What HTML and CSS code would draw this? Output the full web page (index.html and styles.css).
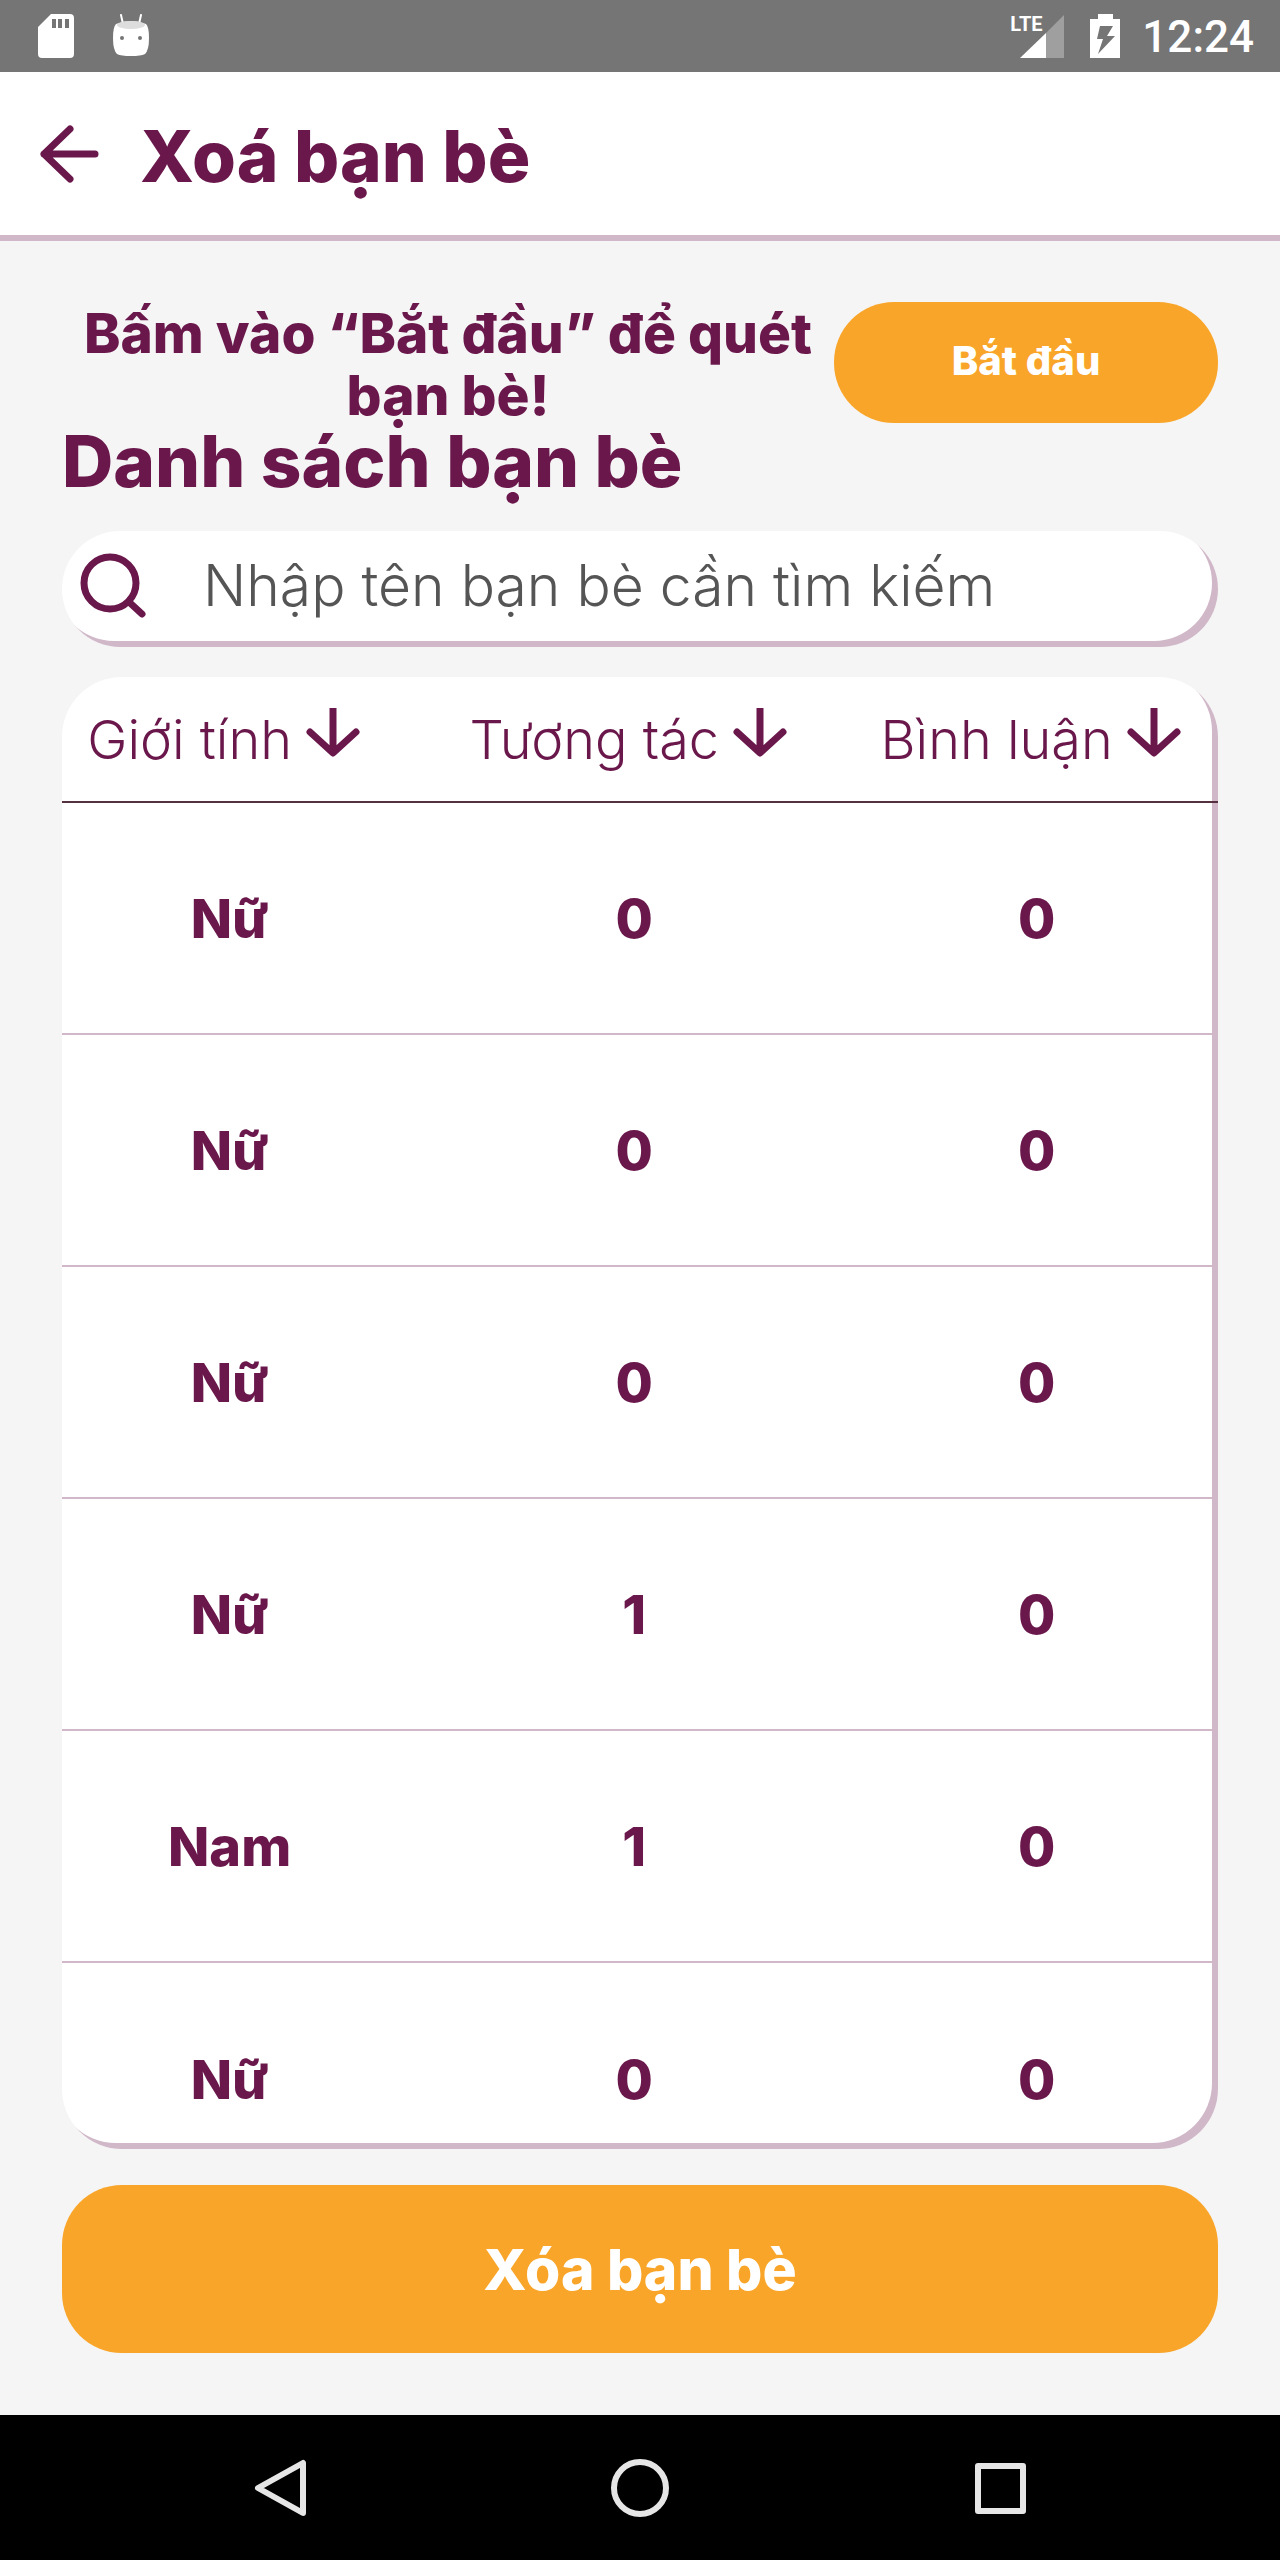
FILE: index.html
```html
<!DOCTYPE html>
<html lang="vi">
<head>
<meta charset="utf-8">
<meta name="viewport" content="width=device-width, initial-scale=1">
<title>Xoá bạn bè</title>
<link rel="stylesheet" href="styles.css">
</head>
<body>
<div class="app">
  <div class="status-bar">
    <div class="status-group status-left">
      <svg width="36" height="44" viewBox="0 0 36 44" aria-hidden="true">
        <path fill="#fff" fill-rule="evenodd" d="M13 0h19a4 4 0 0 1 4 4v36a4 4 0 0 1-4 4H4a4 4 0 0 1-4-4V13zM14 5v9h4V5zM20 5v9h4V5zM27 5v9h4V5z"/>
      </svg>
      <svg width="36" height="44" viewBox="0 0 36 44" aria-hidden="true">
        <path d="M8 1l2 9M28 1l-2 9" stroke="#fff" stroke-width="2" stroke-linecap="round"/>
        <path fill="#fff" d="M3 10q15-6 30 0q3 3 3 14q0 12-4 16q-4 2-14 2t-14-2q-4-4-4-16q0-11 3-14z"/>
        <ellipse cx="18" cy="11" rx="14" ry="4" fill="#ddd"/>
        <circle cx="9" cy="24" r="2" fill="#757575"/>
        <circle cx="27" cy="24" r="2" fill="#757575"/>
      </svg>
    </div>
    <div class="status-group">
      <div class="signal">
        <svg width="44" height="44" viewBox="0 0 44 44" aria-hidden="true">
          <path fill="#9f9f9f" d="M44 1v43H26V19z"/>
          <path fill="#fff" d="M26 19v25H0z"/>
        </svg>
        <span class="network">LTE</span>
      </div>
      <svg class="battery" width="30" height="44" viewBox="0 0 30 44" aria-hidden="true">
        <path fill="#fff" fill-rule="evenodd" d="M8 0h15v5h7v39H0V5h8zM10 12L7 25h6L8 40L25 22h-8l6-10z"/>
      </svg>
      <span class="clock">12:24</span>
    </div>
  </div>

  <header class="header">
    <button class="back" type="button" aria-label="Quay lại">
      <svg width="60" height="58" viewBox="0 0 60 58" fill="none" stroke="currentColor" stroke-width="7" stroke-linecap="round" stroke-linejoin="round" aria-hidden="true">
        <path d="M55 29H4M30 4L4 29l26 25"/>
      </svg>
    </button>
    <h1 class="title">Xoá bạn bè</h1>
  </header>

  <main class="content">
    <div class="scan">
      <p class="scan-text">Bấm vào “Bắt đầu” để quét bạn bè!</p>
      <button class="button scan-button" type="button">Bắt đầu</button>
    </div>
    <h2 class="subtitle">Danh sách bạn bè</h2>

    <label class="search">
      <svg width="68" height="66" viewBox="0 0 68 66" fill="none" stroke="currentColor" stroke-width="7" stroke-linecap="round" aria-hidden="true">
        <ellipse cx="31" cy="30" rx="26" ry="26"/>
        <path d="M50 49l13 12"/>
      </svg>
      <input class="search-input" type="search" aria-label="Tìm bạn bè" placeholder="Nhập tên bạn bè cần tìm kiếm">
    </label>

    <div class="card">
      <table class="friends">
        <colgroup><col class="col-gender"><col class="col-reaction"><col class="col-comment"></colgroup>
        <thead>
          <tr>
            <th scope="col"><button class="sort" type="button">Giới tính<svg class="arrow" viewBox="0 0 54 50" aria-hidden="true"><path d="M27 0v44M4 24l23 21 23-21"/></svg></button></th>
            <th scope="col"><button class="sort" type="button">Tương tác<svg class="arrow" viewBox="0 0 54 50" aria-hidden="true"><path d="M27 0v44M4 24l23 21 23-21"/></svg></button></th>
            <th scope="col"><button class="sort" type="button">Bình luận<svg class="arrow" viewBox="0 0 54 50" aria-hidden="true"><path d="M27 0v44M4 24l23 21 23-21"/></svg></button></th>
          </tr>
        </thead>
        <tbody>
          <tr><td>Nữ</td><td>0</td><td>0</td></tr>
          <tr><td>Nữ</td><td>0</td><td>0</td></tr>
          <tr><td>Nữ</td><td>0</td><td>0</td></tr>
          <tr><td>Nữ</td><td>1</td><td>0</td></tr>
          <tr><td>Nam</td><td>1</td><td>0</td></tr>
          <tr><td>Nữ</td><td>0</td><td>0</td></tr>
        </tbody>
      </table>
    </div>

    <button class="button delete-button" type="button">Xóa bạn bè</button>
  </main>

  <nav class="nav-bar" aria-label="Điều hướng hệ thống">
    <button class="nav-button" type="button" aria-label="Trở về">
      <svg width="60" height="60" viewBox="0 0 60 60" aria-hidden="true"><path d="M53 5v50L8 30z"/></svg>
    </button>
    <button class="nav-button" type="button" aria-label="Màn hình chính">
      <svg width="60" height="60" viewBox="0 0 60 60" aria-hidden="true"><circle cx="30" cy="30" r="26"/></svg>
    </button>
    <button class="nav-button" type="button" aria-label="Ứng dụng gần đây">
      <svg width="60" height="60" viewBox="0 0 60 60" aria-hidden="true"><path d="M8 8h45v45H8z"/></svg>
    </button>
  </nav>
</div>
</body>
</html>
```
FILE: styles.css
```css
:root {
  --plum: #6a174b;
  --lilac: #d0b8c9;
  --orange: #f9a529;
}

* {
  box-sizing: border-box;
}

body {
  margin: 0;
  background: #f5f5f5;
  color: var(--plum);
  font-family: Inter, "Open Sans", sans-serif;
  font-size: 54px;
}

button {
  padding: 0;
  border: 0;
  background: none;
  color: inherit;
  font: inherit;
}

svg {
  display: block;
  flex: none;
}

.app {
  display: flex;
  flex-direction: column;
  height: 100vh;
}

/* System status bar */
.status-bar {
  display: flex;
  justify-content: space-between;
  align-items: center;
  height: 72px;
  padding: 0 26px 0 38px;
  background: #757575;
  color: #fff;
  font-family: Roboto, sans-serif;
}

.status-group {
  display: flex;
  align-items: center;
}

.status-left {
  gap: 39px;
}

.signal {
  position: relative;
}

.network {
  position: absolute;
  top: 0;
  left: -10px;
  font-size: 20px;
  font-weight: 700;
  line-height: 20px;
}

.battery {
  margin: 0 22px 0 26px;
}

.clock {
  padding-top: 2px;
  font-size: 44px;
  font-weight: 500;
  line-height: 72px;
}

/* Header */
.header {
  display: flex;
  align-items: center;
  gap: 40px;
  height: 169px;
  padding: 0 40px;
  border-bottom: 6px solid var(--lilac);
  background: #fff;
}

.title,
.subtitle {
  margin: 0;
  font-size: 71px;
  font-weight: 800;
}

.title {
  padding-top: 4px;
}

/* Content */
.content {
  display: flex;
  flex: 1;
  flex-direction: column;
  min-height: 0;
  padding: 61px 62px 62px;
}

.scan {
  display: flex;
  align-items: flex-start;
}

.scan-text {
  flex: 1;
  margin: 0;
  font-size: 55px;
  font-weight: 800;
  line-height: 62px;
  text-align: center;
}

.button {
  border-radius: 60px;
  background: var(--orange);
  color: #fff;
  font-weight: 800;
}

.scan-button {
  flex: 0 0 384px;
  height: 121px;
  margin-bottom: 8px;
  padding-bottom: 4px;
  font-size: 40px;
}

.subtitle {
  line-height: 60px;
}

.search {
  display: flex;
  flex: none;
  align-items: center;
  gap: 56px;
  height: 116px;
  margin: 40px 0 30px;
  padding: 0 20px 6px 17px;
  border-radius: 60px;
  background: #fff;
  box-shadow: inset -6px -6px 0 var(--lilac);
}

.search-input {
  flex: 1;
  min-width: 0;
  padding: 0;
  border: 0;
  outline: 0;
  background: none;
  color: #555;
  font: 300 57px/80px Inter, "Open Sans", sans-serif;
}

.search-input::placeholder {
  color: #555;
  opacity: 1;
}

/* Friend list */
.card {
  flex: 1;
  min-height: 0;
  padding-bottom: 6px;
  overflow-y: auto;
  scrollbar-width: none;
  border-radius: 60px;
  background: #fff;
  box-shadow: inset -6px -6px 0 var(--lilac);
}

.friends {
  width: 100%;
  border-collapse: separate;
  border-spacing: 0;
  table-layout: fixed;
  text-align: center;
}

.col-gender {
  width: 29%;
}

.col-reaction {
  width: 41%;
}

.col-comment {
  width: 30%;
}

.friends th {
  height: 126px;
  padding: 0 12px 0 0;
  border-bottom: 2px solid #55303f;
  font-weight: 300;
}

.friends td {
  height: 232px;
  padding: 0;
  border-bottom: 2px solid var(--lilac);
  font-weight: 800;
}

.friends tbody tr:last-child td {
  border-bottom: 0;
}

.friends th:last-child {
  padding-right: 28px;
}

.friends td:last-child {
  padding-right: 16px;
}

.sort {
  display: inline-flex;
  gap: 14px;
  line-height: 64px;
  white-space: nowrap;
}

.arrow {
  width: 54px;
  height: 50px;
  fill: none;
  stroke: currentColor;
  stroke-width: 7px;
  stroke-linecap: round;
  stroke-linejoin: round;
}

.delete-button {
  flex: none;
  height: 168px;
  margin-top: 36px;
  font-size: 57px;
}

/* System navigation bar */
.nav-bar {
  display: flex;
  height: 145px;
  padding: 0 100px;
  background: #000;
}

.nav-button {
  display: flex;
  flex: 1;
  align-items: center;
  justify-content: center;
}

.nav-button svg {
  fill: none;
  stroke: #e6e6e6;
  stroke-width: 6px;
  stroke-linejoin: round;
}
```
